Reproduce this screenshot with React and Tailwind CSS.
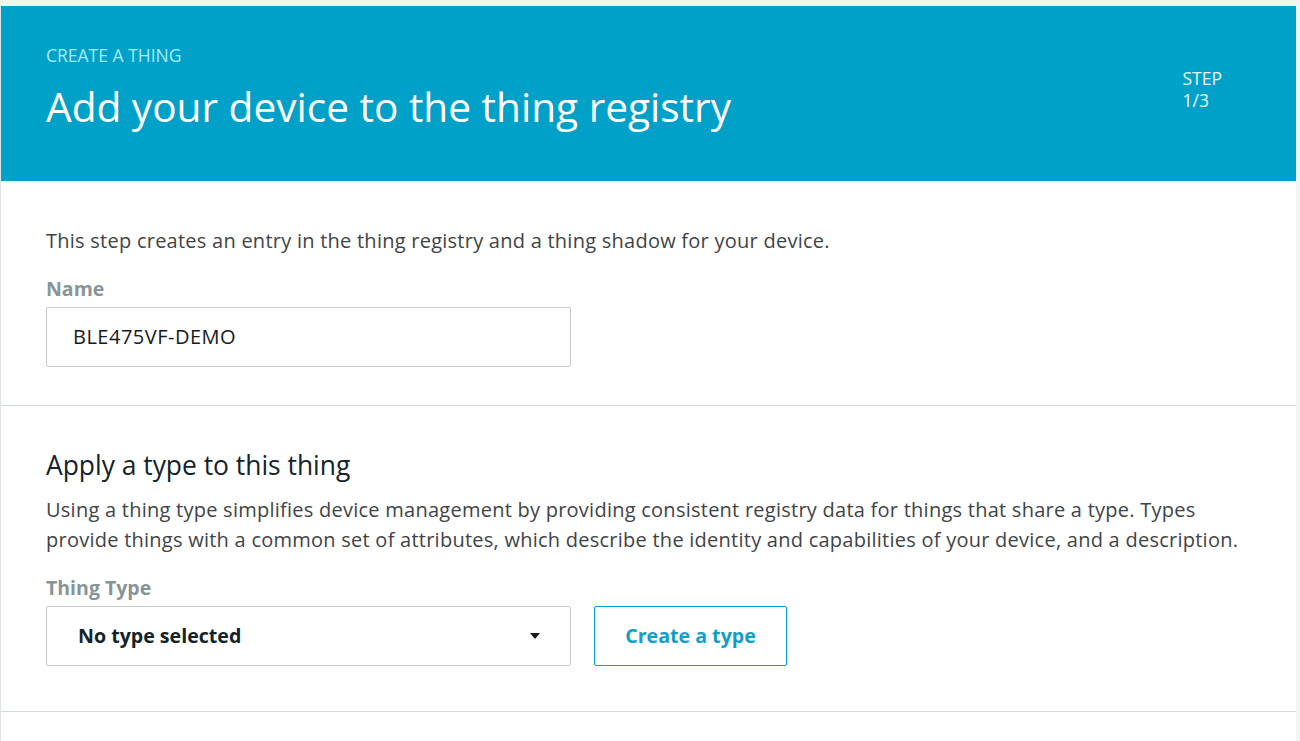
import React from 'react';

const font = { fontFamily: '"Open Sans", "Noto Sans", sans-serif' };

const App = () => {
  return (
    <div className="min-h-screen bg-[#f2f3f3] pt-[6px] pr-[4px]" style={font}>
      <div className="bg-white border-l border-[#e1e4e4] min-h-[735px]">
        {/* Header */}
        <div className="bg-[#00a1c9] h-[175px] flex justify-between pl-[45px] pr-[74px]">
          <div className="pt-[38px]">
            <div className="text-[17.5px] leading-[22px] text-[#a6ecfb] uppercase">Create a thing</div>
            <h1 className="mt-[16px] text-[40.6px] leading-[50px] text-white font-normal">
              Add your device to the thing registry
            </h1>
          </div>
          <div className="pt-[61px] text-[17.5px] leading-[22px] text-[#e6f8fc]">
            <div>STEP</div>
            <div>1/3</div>
          </div>
        </div>

        {/* Name section */}
        <div className="px-[45px] pt-[46px] pb-[38px] border-b border-[#d5dbdb]">
          <p className="text-[20px] leading-[28px] tracking-[0.25px] text-[#3f4447]">
            This step creates an entry in the thing registry and a thing shadow for your device.
          </p>
          <div className="mt-[21px] text-[19.5px] leading-[26px] font-bold text-[#879596]">Name</div>
          <div className="mt-[5px] w-[525px] h-[60px] border border-[#c6cccc] rounded-[2px] flex items-center px-[26px] text-[20px] tracking-[0.5px] text-[#16191f]">
            BLE475VF-DEMO
          </div>
        </div>

        {/* Type section */}
        <div className="pl-[45px] pr-[40px] pt-[42px] pb-[45px] border-b border-[#d5dbdb]">
          <h2 className="text-[26.4px] leading-[34px] text-[#13232a] font-normal">Apply a type to this thing</h2>
          <p className="mt-[13px] text-[20px] leading-[30px] tracking-[0.25px] text-[#3f4447]">
            Using a thing type simplifies device management by providing consistent registry data for things that share a type. Types provide things with a common set of attributes, which describe the identity and capabilities of your device, and a description.
          </p>
          <div className="mt-[20px] text-[19.5px] leading-[26px] font-bold text-[#879596]">Thing Type</div>
          <div className="mt-[5px] flex gap-[23px]">
            <div className="w-[525px] h-[60px] border border-[#c6cccc] rounded-[2px] flex items-center justify-between pl-[31px] pr-[30px]">
              <span className="text-[19.6px] font-bold text-[#13232a]">No type selected</span>
              <svg width="10" height="6" viewBox="0 0 10 6">
                <path d="M0 0 L10 0 L5 6 Z" fill="#16191f" />
              </svg>
            </div>
            <button className="w-[193px] h-[60px] border border-[#00a1c9] rounded-[2px] text-[19.6px] font-bold text-[#0f9fc7] bg-white">
              Create a type
            </button>
          </div>
        </div>
      </div>
    </div>
  );
};

export default App;
